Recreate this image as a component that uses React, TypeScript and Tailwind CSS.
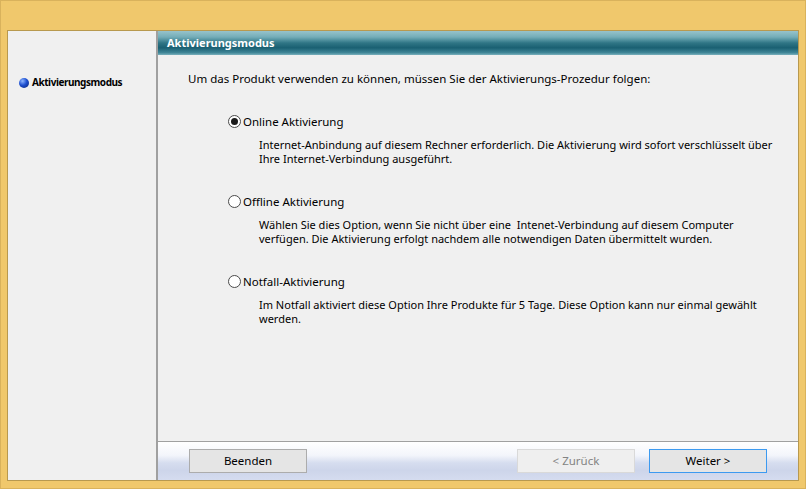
import React from "react";

const options = [
  {
    label: "Online Aktivierung",
    checked: true,
    text: [
      "Internet-Anbindung auf diesem Rechner erforderlich. Die Aktivierung wird sofort verschlüsselt über",
      "Ihre Internet-Verbindung ausgeführt.",
    ],
  },
  {
    label: "Offline Aktivierung",
    checked: false,
    text: [
      "Wählen Sie dies Option, wenn Sie nicht über eine\u00a0 Intenet-Verbindung auf diesem Computer",
      "verfügen. Die Aktivierung erfolgt nachdem alle notwendigen Daten übermittelt wurden.",
    ],
  },
  {
    label: "Notfall-Aktivierung",
    checked: false,
    text: [
      "Im Notfall aktiviert diese Option Ihre Produkte für 5 Tage. Diese Option kann nur einmal gewählt",
      "werden.",
    ],
  },
];

function Radio({ checked }: { checked: boolean }) {
  return (
    <span className="flex h-[13px] w-[13px] items-center justify-center rounded-full border border-[#4a4a4a] bg-white">
      {checked && <span className="h-[7px] w-[7px] rounded-full bg-[#1a1a1a]" />}
    </span>
  );
}

export default function App() {
  return (
    <div
      className="h-[489px] w-[806px] border border-[#d9b25c] bg-[#f0c86c] p-[6px] pt-[29px] pb-[7px] text-black"
      style={{ fontFamily: '"Noto Sans", "Open Sans", sans-serif' }}
    >
      <div className="flex h-full border border-[#b8994f] bg-[#f0f0f0]">
        {/* sidebar */}
        <div className="w-[150px] border-r-2 border-[#a0a0a0] pl-[11px] pt-[44px]">
          <div className="flex items-center gap-[3px]">
            <span className="h-[10px] w-[10px] rounded-full bg-[radial-gradient(circle_at_35%_30%,#8fb6ff_0%,#1d4fd0_45%,#0a2270_100%)]" />
            <span className="whitespace-nowrap text-[10px] font-bold tracking-[-0.45px]">
              Aktivierungsmodus
            </span>
          </div>
        </div>

        {/* main */}
        <div className="flex flex-1 flex-col">
          <div className="flex h-[24px] items-center bg-[linear-gradient(#97c3cb_0%,#74adb8_25%,#2f7585_50%,#1a6072_70%,#3f8596_90%,#7ab1bd_100%)] pl-[9px]">
            <span className="whitespace-nowrap text-[11px] font-bold text-white">Aktivierungsmodus</span>
          </div>

          <div className="flex-1 whitespace-nowrap pl-[30px] pt-[16px] text-[11.5px] leading-[15px]">
            <p>Um das Produkt verwenden zu können, müssen Sie der Aktivierungs-Prozedur folgen:</p>

            <div className="mt-[28px] flex flex-col gap-[28px] pl-[40px]">
              {options.map((o) => (
                <div key={o.label}>
                  <div className="flex items-center gap-[2px]">
                    <Radio checked={o.checked} />
                    <span>{o.label}</span>
                  </div>
                  <div className="mt-[9px] pl-[31px] text-[11px] leading-[14px]">
                    {o.text.map((t) => (
                      <div key={t}>{t}</div>
                    ))}
                  </div>
                </div>
              ))}
            </div>
          </div>

          {/* footer */}
          <div className="flex h-[39px] items-center border-t border-[#a0a0a0] bg-[linear-gradient(#ffffff_0%,#f3f5fb_35%,#d6ddef_55%,#cdd5ea_75%,#d5dcef_100%)] pl-[31px] pr-[31px] text-[11.5px]">
            <button className="h-[24px] w-[118px] border border-[#acacac] bg-[#e5e5e5]">Beenden</button>
            <div className="flex-1" />
            <button className="h-[24px] w-[118px] border border-[#d9d9d9] bg-[#efefef] text-[#838383]">
              &lt; Zurück
            </button>
            <button className="ml-[14px] h-[24px] w-[118px] border border-[#3c9af0] bg-[#e5e5e5]">
              Weiter &gt;
            </button>
          </div>
        </div>
      </div>
    </div>
  );
}
